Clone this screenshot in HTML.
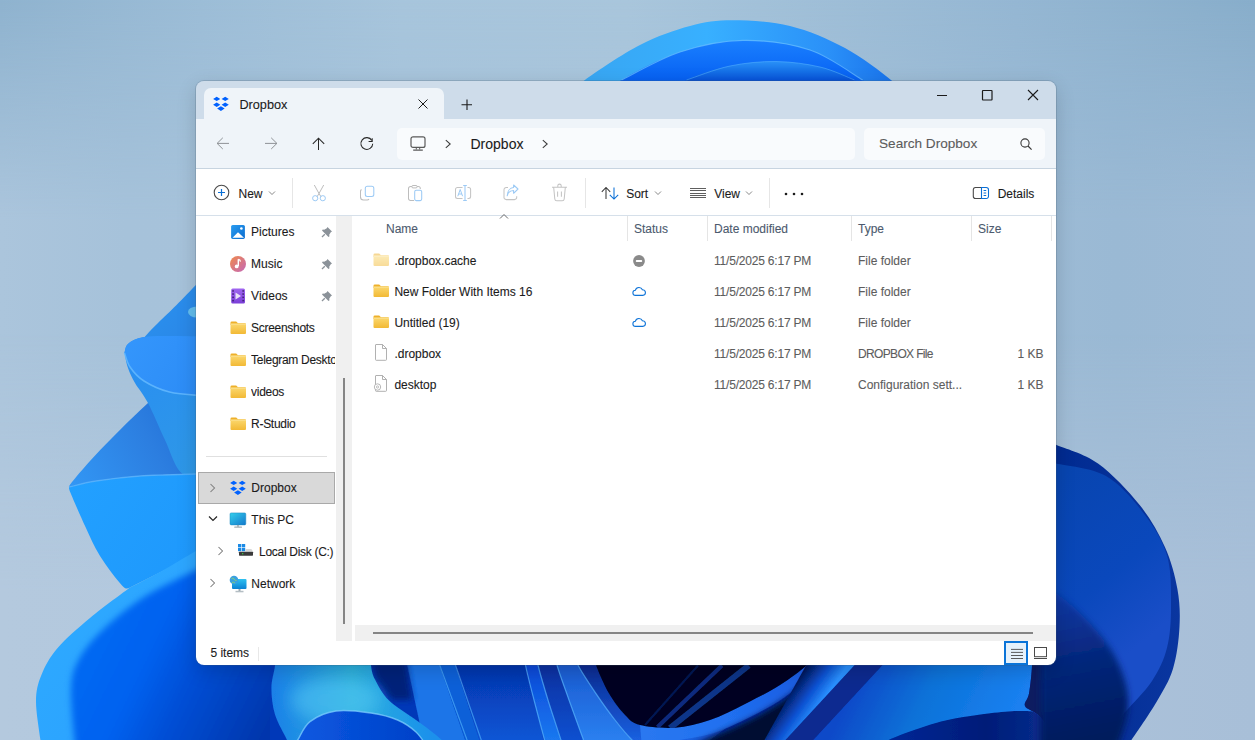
<!DOCTYPE html>
<html><head><meta charset="utf-8">
<style>
*{margin:0;padding:0;box-sizing:border-box}
html,body{width:1255px;height:740px;overflow:hidden}
body{position:relative;font-family:"Liberation Sans",sans-serif;font-size:12px;color:#1b1b1b;background:#a9c2d8}
#wp{position:absolute;left:0;top:0}
.win{position:absolute;left:196px;top:81px;width:860px;height:584px;border-radius:8px;overflow:hidden;box-shadow:0 0 0 1px rgba(70,90,110,.22),0 6px 20px rgba(0,0,0,.16)}
.inner{position:absolute;left:-196px;top:-81px;width:1255px;height:740px}
.abs{position:absolute}
.t{position:absolute;white-space:nowrap;-webkit-text-stroke:0.1px currentColor}
</style></head><body>
<svg id="wp" width="1255" height="740" viewBox="0 0 1255 740"><defs>
<linearGradient id="bgT" x1="0" y1="0" x2="1255" y2="0" gradientUnits="userSpaceOnUse">
 <stop offset="0" stop-color="#8fb3cf"/><stop offset="0.16" stop-color="#9cbdd7"/><stop offset="0.32" stop-color="#a7c5dc"/>
 <stop offset="0.5" stop-color="#a9c6dc"/><stop offset="0.81" stop-color="#95b7d3"/><stop offset="1" stop-color="#88aecb"/>
</linearGradient>
<linearGradient id="bgM" x1="0" y1="0" x2="1255" y2="0" gradientUnits="userSpaceOnUse">
 <stop offset="0" stop-color="#abc5dc"/><stop offset="0.1" stop-color="#a6c2da"/><stop offset="0.5" stop-color="#a8c3da"/><stop offset="0.89" stop-color="#9ab9d4"/><stop offset="1" stop-color="#9ebad5"/>
</linearGradient>
<linearGradient id="bgB" x1="0" y1="0" x2="1255" y2="0" gradientUnits="userSpaceOnUse">
 <stop offset="0" stop-color="#b4c9de"/><stop offset="0.5" stop-color="#b0c6dc"/><stop offset="1" stop-color="#a8bfd8"/>
</linearGradient>
<linearGradient id="mT" x1="0" y1="0" x2="0" y2="740" gradientUnits="userSpaceOnUse">
 <stop offset="0" stop-color="#000"/><stop offset="0.3" stop-color="#fff"/>
</linearGradient>
<linearGradient id="mB" x1="0" y1="0" x2="0" y2="740" gradientUnits="userSpaceOnUse">
 <stop offset="0.45" stop-color="#000"/><stop offset="0.8" stop-color="#fff"/>
</linearGradient>
<mask id="maskM"><rect width="1255" height="740" fill="url(#mT)"/></mask>
<mask id="maskB"><rect width="1255" height="740" fill="url(#mB)"/></mask>

<linearGradient id="a1" x1="584" y1="0" x2="891" y2="0" gradientUnits="userSpaceOnUse"><stop offset="0" stop-color="#38a6f2"/><stop offset="0.4" stop-color="#38b0ff"/><stop offset="0.8" stop-color="#2a90f8"/><stop offset="1" stop-color="#1a74ec"/></linearGradient>
<linearGradient id="a2" x1="0" y1="40" x2="0" y2="81" gradientUnits="userSpaceOnUse"><stop offset="0" stop-color="#1a80ff"/><stop offset="1" stop-color="#0660f2"/></linearGradient>
<linearGradient id="a3" x1="0" y1="61" x2="0" y2="81" gradientUnits="userSpaceOnUse"><stop offset="0" stop-color="#2a92f8"/><stop offset="0.5" stop-color="#1672e8"/><stop offset="1" stop-color="#0650d8"/></linearGradient>
<linearGradient id="pA" x1="150" y1="290" x2="200" y2="335" gradientUnits="userSpaceOnUse"><stop offset="0" stop-color="#2a92f0"/><stop offset="1" stop-color="#2a86e6"/></linearGradient>
<linearGradient id="pBi" x1="125" y1="340" x2="200" y2="390" gradientUnits="userSpaceOnUse"><stop offset="0" stop-color="#3496fc"/><stop offset="1" stop-color="#2c8cf6"/></linearGradient>
<linearGradient id="pBb" x1="130" y1="380" x2="200" y2="480" gradientUnits="userSpaceOnUse"><stop offset="0" stop-color="#2a90f0"/><stop offset="1" stop-color="#2e98e6"/></linearGradient>
<linearGradient id="pCi" x1="70" y1="480" x2="200" y2="410" gradientUnits="userSpaceOnUse"><stop offset="0" stop-color="#3296f4"/><stop offset="0.6" stop-color="#2c7ee0"/><stop offset="1" stop-color="#1f6cd4"/></linearGradient>
<linearGradient id="pCf" x1="70" y1="490" x2="200" y2="580" gradientUnits="userSpaceOnUse"><stop offset="0" stop-color="#22a0ff"/><stop offset="1" stop-color="#1e98fc"/></linearGradient>
<linearGradient id="pDb" x1="40" y1="600" x2="200" y2="740" gradientUnits="userSpaceOnUse"><stop offset="0" stop-color="#2eaaff"/><stop offset="1" stop-color="#2aa0ff"/></linearGradient>
<linearGradient id="pDi" x1="75" y1="600" x2="280" y2="700" gradientUnits="userSpaceOnUse"><stop offset="0" stop-color="#0a6cf4"/><stop offset="0.39" stop-color="#0062f0"/><stop offset="0.59" stop-color="#0050d8"/><stop offset="1" stop-color="#0036ac"/></linearGradient>
<linearGradient id="rO" x1="1056" y1="0" x2="1180" y2="0" gradientUnits="userSpaceOnUse"><stop offset="0" stop-color="#002a90"/><stop offset="1" stop-color="#0a36a0"/></linearGradient>
<linearGradient id="rI" x1="1056" y1="480" x2="1170" y2="620" gradientUnits="userSpaceOnUse"><stop offset="0" stop-color="#0845b0"/><stop offset="0.6" stop-color="#0a48bc"/><stop offset="1" stop-color="#1a4ec8"/></linearGradient>
<linearGradient id="rD" x1="1060" y1="590" x2="1090" y2="740" gradientUnits="userSpaceOnUse"><stop offset="0" stop-color="#0a3aa8"/><stop offset="0.5" stop-color="#06267a"/><stop offset="1" stop-color="#041a5c"/></linearGradient>
<linearGradient id="sw" x1="272" y1="700" x2="433" y2="700" gradientUnits="userSpaceOnUse"><stop offset="0" stop-color="#1a80e8"/><stop offset="0.5" stop-color="#2cb0dc"/><stop offset="1" stop-color="#1a90ec"/></linearGradient>
<linearGradient id="bB" x1="789" y1="0" x2="1056" y2="0" gradientUnits="userSpaceOnUse"><stop offset="0" stop-color="#0a3aa8"/><stop offset="0.3" stop-color="#0a60d0"/><stop offset="0.55" stop-color="#0a72d8"/><stop offset="0.85" stop-color="#0c5cc0"/><stop offset="1" stop-color="#0c48a0"/></linearGradient>
<linearGradient id="sL" x1="196" y1="0" x2="280" y2="0" gradientUnits="userSpaceOnUse"><stop offset="0" stop-color="#0050d8"/><stop offset="1" stop-color="#0036ac"/></linearGradient>
<linearGradient id="sDk" x1="0" y1="655" x2="0" y2="725" gradientUnits="userSpaceOnUse"><stop offset="0" stop-color="#0a2a90"/><stop offset="1" stop-color="#1a4ad0"/></linearGradient>
<linearGradient id="sG" x1="0" y1="655" x2="0" y2="745" gradientUnits="userSpaceOnUse"><stop offset="0" stop-color="#0430a8"/><stop offset="1" stop-color="#0a58d8"/></linearGradient>
<linearGradient id="sH" x1="300" y1="0" x2="425" y2="0" gradientUnits="userSpaceOnUse"><stop offset="0" stop-color="#0a58e0"/><stop offset="1" stop-color="#0040c8"/></linearGradient>
<linearGradient id="sBand" x1="0" y1="655" x2="0" y2="745" gradientUnits="userSpaceOnUse"><stop offset="0" stop-color="#2a78f0"/><stop offset="1" stop-color="#3a8cf8"/></linearGradient>
<linearGradient id="sStripe" x1="640" y1="730" x2="760" y2="655" gradientUnits="userSpaceOnUse"><stop offset="0" stop-color="#1a50d8"/><stop offset="1" stop-color="#0a2a88"/></linearGradient>
<linearGradient id="sLD" x1="880" y1="0" x2="1056" y2="0" gradientUnits="userSpaceOnUse"><stop offset="0" stop-color="#00289a"/><stop offset="0.6" stop-color="#001c78"/><stop offset="1" stop-color="#0a3090"/></linearGradient>
<filter id="blur1" x="-5%" y="-20%" width="110%" height="140%"><feGaussianBlur stdDeviation="0.7"/></filter>
<filter id="blur3" x="-30%" y="-30%" width="160%" height="160%"><feGaussianBlur stdDeviation="3"/></filter>
<filter id="blur6" x="-50%" y="-50%" width="200%" height="200%"><feGaussianBlur stdDeviation="8"/></filter>
<linearGradient id="gB1" x1="0" y1="665" x2="0" y2="740" gradientUnits="userSpaceOnUse"><stop offset="0" stop-color="#0a48d8"/><stop offset="1" stop-color="#1a78f0"/></linearGradient>
<linearGradient id="gB2" x1="0" y1="665" x2="0" y2="740" gradientUnits="userSpaceOnUse"><stop offset="0" stop-color="#0a30a0"/><stop offset="1" stop-color="#0a50d0"/></linearGradient>
<linearGradient id="gB3" x1="0" y1="665" x2="0" y2="740" gradientUnits="userSpaceOnUse"><stop offset="0" stop-color="#1a5ad0"/><stop offset="1" stop-color="#2a80f0"/></linearGradient>
<linearGradient id="gB4" x1="0" y1="665" x2="0" y2="740" gradientUnits="userSpaceOnUse"><stop offset="0" stop-color="#0a2a90"/><stop offset="1" stop-color="#1a60e0"/></linearGradient>
<linearGradient id="gWrap" x1="640" y1="0" x2="810" y2="0" gradientUnits="userSpaceOnUse"><stop offset="0" stop-color="#2a78f0"/><stop offset="0.5" stop-color="#2070f0"/><stop offset="1" stop-color="#1a5ae0"/></linearGradient>
<linearGradient id="gR0" x1="775" y1="705" x2="805" y2="726" gradientUnits="userSpaceOnUse"><stop offset="0" stop-color="#020a40"/><stop offset="0.6" stop-color="#0a50d0"/><stop offset="1" stop-color="#2a90ff"/></linearGradient>
<linearGradient id="gR2" x1="860" y1="670" x2="1000" y2="740" gradientUnits="userSpaceOnUse"><stop offset="0" stop-color="#0a48c8"/><stop offset="0.45" stop-color="#0a72d8"/><stop offset="1" stop-color="#1a80f0"/></linearGradient>
</defs><rect width="1255" height="740" fill="url(#bgT)"/><rect width="1255" height="740" fill="url(#bgM)" mask="url(#maskM)"/><rect width="1255" height="740" fill="url(#bgB)" mask="url(#maskB)"/><path d="M572 95 C574.1 92.5 573.6 88.3 584.9 80.0 C596.2 71.7 622.5 54.0 640.0 45.0 C657.5 36.0 674.6 30.1 690.0 26.0 C705.4 21.9 715.9 20.3 732.6 20.3 C749.3 20.3 771.3 21.4 790.0 26.0 C808.7 30.6 828.2 39.0 845.0 48.0 C861.8 57.0 881.5 72.2 891.0 80.0 C900.5 87.8 900.2 92.5 902.0 95.0 Z" fill="url(#a1)"/><path d="M610 95 C611.9 92.5 609.8 87.2 621.5 80.0 C633.2 72.8 659.8 58.6 680.0 52.0 C700.2 45.4 721.3 40.7 743.0 40.4 C764.7 40.1 790.0 43.4 810.0 50.0 C830.0 56.6 852.4 72.5 862.7 80.0 C873.0 87.5 870.5 92.5 872.0 95.0 Z" fill="url(#a2)"/><path d="M621.5 80 C631.2 75.3 659.8 58.6 680.0 52.0 C700.2 45.4 721.3 40.7 743.0 40.4 C764.7 40.1 790.0 43.4 810.0 50.0 C830.0 56.6 853.9 75.0 862.7 80.0" fill="none" stroke="#6cc2ff" stroke-width="1.2" opacity="0.7"/><path d="M674 95 C676.1 92.5 677.2 84.8 686.5 80.0 C695.8 75.2 715.1 69.1 730.0 66.0 C744.9 62.9 761.0 61.3 776.0 61.5 C791.0 61.7 806.9 63.9 820.0 67.0 C833.1 70.1 847.2 75.3 854.5 80.0 C861.8 84.7 862.4 92.5 864.0 95.0 Z" fill="url(#a3)"/><path d="M686.5 80 C693.8 77.7 715.1 69.1 730.0 66.0 C744.9 62.9 761.0 61.3 776.0 61.5 C791.0 61.7 806.9 63.9 820.0 67.0 C833.1 70.1 848.8 77.8 854.5 80.0" fill="none" stroke="#5cb8ff" stroke-width="1" opacity="0.5"/><path d="M202 279 C200.9 280.1 199.7 281.2 195.4 285.5 C191.2 289.8 182.7 298.8 176.5 305.0 C170.3 311.2 162.9 318.2 158.0 323.0 C153.1 327.8 150.3 330.8 147.3 334.0 C144.3 337.2 141.2 340.7 140.0 342.0 L140 350 L205 350 L205 279 Z" fill="url(#pA)"/><ellipse cx="197" cy="312" rx="9" ry="5.5" fill="#6ec8f0" opacity="0.85" filter="url(#blur1)"/><path d="M148 403 C145.0 405.8 136.2 414.0 130.0 420.0 C123.8 426.0 117.7 432.2 111.0 439.0 C104.3 445.8 96.5 453.8 90.0 461.0 C83.5 468.2 75.5 477.7 72.0 482.0 C68.5 486.3 69.5 486.2 69.0 487.0  C73.5 486.0 84.2 482.8 96.0 481.0 C107.8 479.2 123.3 477.2 140.0 476.0 C156.7 474.8 185.2 474.3 196.0 474.0 C206.8 473.7 203.5 474.0 205.0 474.0 L205 403 Z" fill="url(#pCi)"/><path d="M124.5 353 C124.9 351.7 125.2 347.2 127.0 345.0 C128.8 342.8 131.3 340.9 135.0 339.5 C138.7 338.1 142.3 337.1 149.0 336.5 C155.7 335.9 165.7 335.9 175.0 336.0 C184.3 336.1 200.0 336.8 205.0 337.0 L205 485  C200.9 482.8 187.1 479.5 180.4 472.0 C173.7 464.5 170.4 451.5 165.0 440.0 C159.6 428.5 153.0 412.5 148.0 403.0 C143.0 393.5 138.3 388.8 135.0 383.0 C131.7 377.2 129.8 373.0 128.0 368.0 C126.2 363.0 125.1 355.5 124.5 353.0 Z" fill="url(#pBb)"/><path d="M124.5 353 C124.9 351.7 125.2 347.2 127.0 345.0 C128.8 342.8 131.3 340.9 135.0 339.5 C138.7 338.1 142.3 337.1 149.0 336.5 C155.7 335.9 165.7 335.9 175.0 336.0 C184.3 336.1 200.0 336.8 205.0 337.0 L205 396  C199.1 395.3 179.7 394.5 169.5 392.0 C159.3 389.5 150.6 385.2 144.0 381.0 C137.4 376.8 133.2 371.7 130.0 367.0 C126.8 362.3 125.4 355.3 124.5 353.0 Z" fill="url(#pBi)"/><path d="M205 396 C199.1 395.3 179.7 394.5 169.5 392.0 C159.3 389.5 150.6 385.2 144.0 381.0 C137.4 376.8 133.2 371.7 130.0 367.0 C126.8 362.3 125.4 355.3 124.5 353.0" fill="none" stroke="#66bcff" stroke-width="1.6" opacity="0.8"/><path d="M69 487 C69.3 488.2 68.2 487.3 71.0 494.0 C73.8 500.7 80.7 516.7 85.5 527.0 C90.3 537.3 93.9 546.2 100.0 556.0 C106.1 565.8 117.2 580.2 122.0 585.5 C126.8 590.8 127.8 587.6 129.0 588.0 L205 550 L205 474  C203.5 474.0 206.8 473.7 196.0 474.0 C185.2 474.3 156.7 474.8 140.0 476.0 C123.3 477.2 107.8 479.2 96.0 481.0 C84.2 482.8 73.5 486.0 69.0 487.0 Z" fill="url(#pCf)"/><path d="M69 487 C73.5 486.0 84.2 482.8 96.0 481.0 C107.8 479.2 123.3 477.2 140.0 476.0 C156.7 474.8 185.2 474.3 196.0 474.0 C206.8 473.7 203.5 474.0 205.0 474.0" fill="none" stroke="#5cb4fc" stroke-width="1.4" opacity="0.7"/><path d="M129 588 C134.2 585.3 148.8 578.2 160.0 572.0 C171.2 565.8 188.5 555.2 196.0 551.0 C203.5 546.8 203.5 547.7 205.0 547.0 L205 745 L41 745  C40.5 737.8 36.0 713.7 36.0 702.0 C36.0 690.3 37.8 684.0 41.4 675.0 C45.0 666.0 49.5 657.5 57.6 648.0 C65.7 638.5 77.8 628.2 90.0 618.0 C102.2 607.8 123.8 592.2 130.6 587.0 Z" fill="url(#pDb)"/><path d="M205 566 C203.5 566.7 206.2 564.8 196.0 570.0 C185.8 575.2 159.4 587.2 144.0 597.0 C128.6 606.8 114.4 618.7 103.6 629.0 C92.8 639.3 84.4 648.7 79.0 659.0 C73.6 669.3 71.4 674.2 71.0 691.0 C70.6 707.8 75.6 748.5 76.5 760.0 L300 760 L300 566 Z" fill="url(#pDi)" filter="url(#blur3)"/><g filter="url(#blur1)"><rect x="270" y="655" width="790" height="90" fill="#0438b8"/><path d="M405 655 L436 655 L468 748 L425 748 Z" fill="#1a74e8"/><path d="M436 655 L452 655 L482 748 L468 748 Z" fill="#0a60d8"/><path d="M452 655 L526 655 L545 748 L482 748 Z" fill="url(#sG)"/><path d="M525.5 655 C525.5 656.7 524.1 657.5 525.5 665.0 C526.9 672.5 530.8 687.5 534.0 700.0 C537.2 712.5 542.5 732.0 544.5 740.0 C546.5 748.0 545.8 746.7 546.0 748.0 L563 748  C562.7 746.7 563.5 748.0 561.0 740.0 C558.5 732.0 551.8 712.5 548.0 700.0 C544.2 687.5 539.7 672.5 538.0 665.0 C536.3 657.5 538.0 656.7 538.0 655.0 Z" fill="url(#gB1)"/><path d="M538 655 C538.0 656.7 536.3 657.5 538.0 665.0 C539.7 672.5 544.2 687.5 548.0 700.0 C551.8 712.5 558.5 732.0 561.0 740.0 C563.5 748.0 562.7 746.7 563.0 748.0 L586 748  C585.6 746.7 586.3 748.0 583.5 740.0 C580.7 732.0 573.4 712.5 569.0 700.0 C564.6 687.5 559.0 672.5 557.0 665.0 C555.0 657.5 557.0 656.7 557.0 655.0 Z" fill="url(#gB2)"/><path d="M557 655 C557.0 656.7 555.0 657.5 557.0 665.0 C559.0 672.5 564.6 687.5 569.0 700.0 C573.4 712.5 580.7 732.0 583.5 740.0 C586.3 748.0 585.6 746.7 586.0 748.0 L642 748  C640.3 746.7 636.5 744.7 632.0 740.0 C627.5 735.3 621.0 727.7 615.0 720.0 C609.0 712.3 602.2 702.8 596.0 693.6 C589.8 684.4 581.0 671.4 578.0 665.0 C575.0 658.6 578.0 656.7 578.0 655.0 Z" fill="url(#gB3)"/><path d="M578 655 C578.0 656.7 575.0 658.6 578.0 665.0 C581.0 671.4 589.8 684.4 596.0 693.6 C602.2 702.8 609.0 712.3 615.0 720.0 C621.0 727.7 627.5 735.3 632.0 740.0 C636.5 744.7 640.3 746.7 642.0 748.0 L700 748 L820 655 Z" fill="url(#gB4)"/><path d="M525.5 655 C525.5 656.7 524.1 657.5 525.5 665.0 C526.9 672.5 530.8 687.5 534.0 700.0 C537.2 712.5 542.5 732.0 544.5 740.0 C546.5 748.0 545.8 746.7 546.0 748.0" fill="none" stroke="#5ab8ff" stroke-width="1.2" opacity="0.7"/><path d="M538 655 C538.0 656.7 536.3 657.5 538.0 665.0 C539.7 672.5 544.2 687.5 548.0 700.0 C551.8 712.5 558.5 732.0 561.0 740.0 C563.5 748.0 562.7 746.7 563.0 748.0" fill="none" stroke="#5ab8ff" stroke-width="1.2" opacity="0.7"/><path d="M557 655 C557.0 656.7 555.0 657.5 557.0 665.0 C559.0 672.5 564.6 687.5 569.0 700.0 C573.4 712.5 580.7 732.0 583.5 740.0 C586.3 748.0 585.6 746.7 586.0 748.0" fill="none" stroke="#5ab8ff" stroke-width="1.2" opacity="0.7"/><path d="M578 655 C578.0 656.7 575.0 658.6 578.0 665.0 C581.0 671.4 589.8 684.4 596.0 693.6 C602.2 702.8 609.0 712.3 615.0 720.0 C621.0 727.7 627.5 735.3 632.0 740.0 C636.5 744.7 640.3 746.7 642.0 748.0" fill="none" stroke="#5ab8ff" stroke-width="1.2" opacity="0.7"/><path d="M436 655 L470 748" stroke="#5ab8ff" stroke-width="1.2" opacity="0.6"/><path d="M452 655 L484 748" stroke="#5ab8ff" stroke-width="1.2" opacity="0.6"/><path d="M640 725 C645.8 725.5 663.3 728.5 675.0 727.7 C686.7 726.9 698.3 724.0 710.0 720.0 C721.7 716.0 733.3 709.8 745.0 704.0 C756.7 698.2 769.8 691.4 780.0 685.0 C790.2 678.6 800.8 670.5 806.5 665.5 C812.2 660.5 812.8 656.8 814.0 655.0 L830 655  C828.7 656.8 829.5 658.5 822.0 665.5 C814.5 672.5 797.0 688.4 785.0 697.0 C773.0 705.6 761.8 711.0 750.0 717.0 C738.2 723.0 725.7 729.2 714.0 733.0 C702.3 736.8 692.0 737.5 680.0 740.0 C668.0 742.5 648.3 746.7 642.0 748.0 L640 725 Z" fill="url(#gWrap)"/><path d="M690 748 C705 738 730 730 760 714 C785 700 800 690 815 672 L830 680 C815 720 790 740 770 748 Z" fill="#000a30" filter="url(#blur3)"/><path d="M596 655 C596.0 656.7 593.8 658.6 596.0 665.0 C598.2 671.4 604.2 685.3 609.0 693.6 C613.8 701.9 619.8 709.8 625.0 715.0 C630.2 720.2 631.7 722.9 640.0 725.0 C648.3 727.1 663.3 728.5 675.0 727.7 C686.7 726.9 698.3 724.0 710.0 720.0 C721.7 716.0 733.3 709.8 745.0 704.0 C756.7 698.2 769.8 691.4 780.0 685.0 C790.2 678.6 800.8 670.5 806.5 665.5 C812.2 660.5 812.8 656.8 814.0 655.0 Z" fill="#000520"/><clipPath id="navyClip"><path d="M596 655 C596.0 656.7 593.8 658.6 596.0 665.0 C598.2 671.4 604.2 685.3 609.0 693.6 C613.8 701.9 619.8 709.8 625.0 715.0 C630.2 720.2 631.7 722.9 640.0 725.0 C648.3 727.1 663.3 728.5 675.0 727.7 C686.7 726.9 698.3 724.0 710.0 720.0 C721.7 716.0 733.3 709.8 745.0 704.0 C756.7 698.2 769.8 691.4 780.0 685.0 C790.2 678.6 800.8 670.5 806.5 665.5 C812.2 660.5 812.8 656.8 814.0 655.0 Z"/></clipPath><g clip-path="url(#navyClip)" filter="url(#blur1)"><path d="M645 725 L698 665.5" stroke="#0a2a80" stroke-width="2" opacity="0.55"/><path d="M657.5 727 L722 665.5" stroke="#1a4ad0" stroke-width="4" opacity="0.55"/><path d="M670 728 L748.7 665.5" stroke="#1a60e0" stroke-width="6" opacity="0.55"/></g><path d="M760 748 L806 665.5 L812 655 L864 655 L780 748 Z" fill="url(#gR0)"/><path d="M778 748 L864 655 L892 655 L806 748 Z" fill="#0a2a90" filter="url(#blur1)"/><path d="M806 748 L892 655  L1030 655  C1030.3 656.8 1032.2 659.1 1032.0 665.5 C1031.8 671.9 1030.2 686.8 1029.0 693.5 C1027.8 700.2 1023.6 702.5 1025.0 706.0 C1026.4 709.5 1033.2 710.3 1037.6 714.6 C1042.0 718.9 1048.5 727.8 1051.6 732.0 C1054.7 736.2 1054.9 737.3 1056.0 740.0 C1057.1 742.7 1057.7 746.7 1058.0 748.0 Z" fill="url(#gR2)"/><path d="M1030 655 C1030.3 656.8 1032.2 659.1 1032.0 665.5 C1031.8 671.9 1030.2 686.8 1029.0 693.5 C1027.8 700.2 1023.6 702.5 1025.0 706.0 C1026.4 709.5 1033.2 710.3 1037.6 714.6 C1042.0 718.9 1048.5 727.8 1051.6 732.0 C1054.7 736.2 1054.9 737.3 1056.0 740.0 C1057.1 742.7 1057.7 746.7 1058.0 748.0 L1060 748 L1060 655 Z" fill="#0a1a60"/><path d="M880 748 C881.4 746.7 878.4 744.4 888.6 740.0 C898.8 735.6 923.5 726.1 941.0 721.6 C958.5 717.1 979.8 714.6 993.8 712.8 C1007.8 711.0 1017.7 710.7 1025.0 711.0 C1032.3 711.3 1033.2 711.1 1037.6 714.6 C1042.0 718.1 1048.5 727.8 1051.6 732.0 C1054.7 736.2 1054.9 737.3 1056.0 740.0 C1057.1 742.7 1057.7 746.7 1058.0 748.0 Z" fill="url(#sLD)"/><path d="M370 655 L405 655 L412 700 L392 700 L376 680 Z" fill="#05207a" filter="url(#blur3)"/><path d="M275 650 C275.0 652.6 275.6 659.2 275.0 665.5 C274.4 671.8 271.4 679.8 271.4 688.0 C271.4 696.2 272.4 705.9 275.0 714.6 C277.6 723.3 284.5 734.4 287.0 740.0 C289.5 745.6 289.5 746.7 290.0 748.0 L450 748  C447.7 745.8 441.7 739.7 436.0 735.0 C430.3 730.3 423.8 725.7 416.0 720.0 C408.2 714.3 395.8 707.4 389.0 700.6 C382.2 693.9 378.0 685.4 375.0 679.5 C372.0 673.6 371.7 670.4 371.0 665.5 C370.3 660.6 371.0 652.6 371.0 650.0 Z" fill="url(#sw)"/><ellipse cx="335" cy="700" rx="45" ry="22" fill="#55c8f4" opacity="0.55" filter="url(#blur6)"/><path d="M292 748 C292.9 746.7 294.7 744.4 297.7 740.0 C300.7 735.6 303.6 726.4 310.0 721.6 C316.4 716.8 325.8 712.4 336.0 711.0 C346.2 709.6 360.7 711.5 371.0 713.0 C381.3 714.5 390.1 716.8 397.6 720.0 C405.1 723.2 410.9 727.3 416.0 732.0 C421.1 736.7 426.0 745.3 428.0 748.0 Z" fill="url(#sH)"/><path d="M292 748 C292.9 746.7 294.7 744.4 297.7 740.0 C300.7 735.6 303.6 726.4 310.0 721.6 C316.4 716.8 325.8 712.4 336.0 711.0 C346.2 709.6 360.7 711.5 371.0 713.0 C381.3 714.5 390.1 716.8 397.6 720.0 C405.1 723.2 410.9 727.3 416.0 732.0 C421.1 736.7 426.0 745.3 428.0 748.0" fill="none" stroke="#7fd0ff" stroke-width="1.4" opacity="0.75"/></g><path d="M1050 442 C1051.0 442.4 1048.0 441.1 1056.0 444.7 C1064.0 448.3 1084.0 453.4 1098.0 463.5 C1112.0 473.6 1128.5 491.1 1139.7 505.0 C1150.9 518.9 1158.6 533.0 1164.9 547.0 C1171.2 561.0 1175.0 575.7 1177.4 589.0 C1179.8 602.3 1180.2 613.5 1179.5 626.8 C1178.8 640.1 1176.8 656.2 1173.0 668.7 C1169.2 681.2 1163.4 690.1 1156.5 702.0 C1149.6 713.9 1136.7 732.3 1131.4 740.0 C1126.2 747.7 1126.1 746.7 1125.0 748.0 L1045 748 L1045 442 Z" fill="url(#rO)"/><path d="M1050 462 C1051.0 462.2 1046.7 461.2 1056.0 463.5 C1065.3 465.8 1091.3 467.6 1106.0 476.0 C1120.7 484.4 1133.8 500.4 1144.0 513.7 C1154.2 527.0 1162.5 540.2 1167.0 555.6 C1171.5 571.0 1171.0 590.6 1171.0 606.0 C1171.0 621.4 1170.2 635.3 1167.0 647.8 C1163.8 660.3 1159.3 669.8 1152.0 681.0 C1144.7 692.2 1130.7 705.0 1123.0 714.8 C1115.3 724.6 1109.8 734.5 1106.0 740.0 C1102.2 745.5 1101.0 746.7 1100.0 748.0 L1045 748 L1045 462 Z" fill="url(#rI)"/><path d="M1050 590 C1051.0 590.5 1050.8 589.0 1056.0 593.0 C1061.2 597.0 1072.0 604.8 1081.0 614.0 C1090.0 623.2 1102.7 636.8 1110.0 648.0 C1117.3 659.2 1122.0 670.7 1125.0 681.0 C1128.0 691.3 1128.8 700.2 1128.0 710.0 C1127.2 719.8 1122.2 733.7 1120.0 740.0 C1117.8 746.3 1115.8 746.7 1115.0 748.0 L1040 748 L1040 590 Z" fill="url(#rD)" filter="url(#blur3)"/></svg>
<div class="win"><div class="inner">
<div class="abs" style="left:196px;top:81px;width:860px;height:38px;background:#cedcea;"></div>
<div class="abs" style="left:204px;top:88px;width:240px;height:31px;background:#eff4f9;border-radius:7px 7px 0 0"></div>
<div class="abs" style="left:196px;top:119px;width:860px;height:49px;background:#eff4f9;"></div>
<div class="abs" style="left:196px;top:168px;width:860px;height:1px;background:#c7d4e0;"></div>
<div class="abs" style="left:196px;top:169px;width:860px;height:46px;background:#ffffff;"></div>
<div class="abs" style="left:196px;top:215px;width:860px;height:1px;background:#d6e0ea;"></div>
<div class="abs" style="left:196px;top:216px;width:860px;height:449px;background:#ffffff;"></div>
<svg class="abs" style="left:210px;top:94px" width="22" height="20" viewBox="0 0 22 20"><path fill="#0061fe" d="M3.10 4.90L6.70 2.70L10.30 4.90L6.70 7.10ZM11.60 4.90L15.20 2.70L18.80 4.90L15.20 7.10ZM3.10 10.70L6.70 8.50L10.30 10.70L6.70 12.90ZM11.60 10.70L15.20 8.50L18.80 10.70L15.20 12.90ZM7.10 14.60L10.90 12.15L14.70 14.60L10.90 17.05Z"/></svg>
<div class="t" style="left:239.4px;top:98.85px;font-size:12.7px;line-height:12.7px;color:#1b1b1b;">Dropbox</div>
<svg class="abs" style="left:418px;top:99px" width="10" height="10" viewBox="0 0 10 10"><path d="M0.5 0.5L9.5 9.5M9.5 0.5L0.5 9.5" stroke="#1b1b1b" stroke-width="1"/></svg>
<svg class="abs" style="left:461px;top:99px" width="12" height="12" viewBox="0 0 12 12"><path d="M6 0.5V11M0.5 5.8H11" stroke="#1b1b1b" stroke-width="1.1"/></svg>
<div class="abs" style="left:937px;top:95px;width:10px;height:1px;background:#1b1b1b;"></div>
<svg class="abs" style="left:981px;top:89px" width="12" height="12" viewBox="0 0 12 12"><rect x="1.5" y="1.5" width="9.5" height="9.5" fill="none" stroke="#1b1b1b" stroke-width="1.2" rx="0.5"/></svg>
<svg class="abs" style="left:1027px;top:89px" width="12" height="12" viewBox="0 0 12 12"><path d="M1 1L11 11M11 1L1 11" stroke="#1b1b1b" stroke-width="1.1"/></svg>
<svg class="abs" style="left:215px;top:137px" width="16" height="13" viewBox="0 0 16 13"><path d="M2 6.4H14M7.8 0.8L2.1 6.4L7.8 12" fill="none" stroke="#8e9296" stroke-width="1"/></svg>
<svg class="abs" style="left:263px;top:137px" width="16" height="13" viewBox="0 0 16 13"><path d="M2 6.4H14M8.2 0.8L13.9 6.4L8.2 12" fill="none" stroke="#8e9296" stroke-width="1"/></svg>
<svg class="abs" style="left:311px;top:137px" width="15" height="14" viewBox="0 0 15 14"><path d="M7.5 1.2V13M1.8 6.8L7.5 1.2L13.2 6.8" fill="none" stroke="#262626" stroke-width="1.05"/></svg>
<svg class="abs" style="left:359px;top:136px" width="16" height="16" viewBox="0 0 16 16"><path d="M12.8 4.4A5.9 5.9 0 1 0 13.7 7.7" fill="none" stroke="#262626" stroke-width="1.05"/><path d="M13.2 2.2V5.5H9.6" fill="none" stroke="#262626" stroke-width="1.05"/></svg>
<div class="abs" style="left:397px;top:128px;width:458px;height:32px;background:#f9fbfd;border-radius:5px"></div>
<svg class="abs" style="left:409px;top:135px" width="18" height="17" viewBox="0 0 18 17"><rect x="2" y="1.8" width="14" height="10.6" rx="2" fill="none" stroke="#5a5a5a" stroke-width="1.2"/><path d="M7.3 12.6V14.5M10.7 12.6V14.5" stroke="#5a5a5a" stroke-width="1"/><path d="M4.2 15.2H13.8" stroke="#5a5a5a" stroke-width="1.3"/></svg>
<svg class="abs" style="left:444px;top:139px" width="8" height="10" viewBox="0 0 8 10"><path d="M1.8 1.2L6.2 5L1.8 8.8" fill="none" stroke="#3a3a3a" stroke-width="1.05"/></svg>
<div class="t" style="left:470.5px;top:136.95px;font-size:14px;line-height:14px;color:#1b1b1b;">Dropbox</div>
<svg class="abs" style="left:541px;top:139px" width="8" height="10" viewBox="0 0 8 10"><path d="M1.8 1.2L6.2 5L1.8 8.8" fill="none" stroke="#3a3a3a" stroke-width="1.05"/></svg>
<div class="abs" style="left:864px;top:128px;width:181px;height:32px;background:#f9fbfd;border-radius:5px"></div>
<div class="t" style="left:879px;top:137.19px;font-size:13.6px;line-height:13.6px;color:#5c5c5c;">Search Dropbox</div>
<svg class="abs" style="left:1019px;top:137px" width="14" height="14" viewBox="0 0 14 14"><circle cx="6" cy="6" r="4.1" fill="none" stroke="#3a3a3a" stroke-width="1.1"/><path d="M9 9L12.6 12.6" stroke="#3a3a3a" stroke-width="1.2"/></svg>
<svg class="abs" style="left:213px;top:184px" width="17" height="17" viewBox="0 0 17 17"><circle cx="8.5" cy="8.5" r="7.3" fill="none" stroke="#4a4a4a" stroke-width="1.1"/><path d="M8.5 5V12M5 8.5H12" stroke="#0a6fd6" stroke-width="1.2"/></svg>
<div class="t" style="left:238.5px;top:187.64px;font-size:12px;line-height:12px;color:#1b1b1b;">New</div>
<svg class="abs" style="left:268px;top:190px" width="8" height="6" viewBox="0 0 8 6"><path d="M1 1.5L4 4.5L7 1.5" fill="none" stroke="#7a7a7a" stroke-width="0.9"/></svg>
<div class="abs" style="left:292px;top:178px;width:1px;height:30px;background:#e6e6e6;"></div>
<svg class="abs" style="left:309px;top:183px" width="20" height="20" viewBox="0 0 20 20"><path d="M5.3 2L10 10.5M14.7 2L10 10.5L8 13.8M10 10.5L12 13.8" fill="none" stroke="#bdbdbd" stroke-width="1"/><circle cx="6.2" cy="15.2" r="2.6" fill="none" stroke="#9ccaf5" stroke-width="1"/><circle cx="13.8" cy="15.2" r="2.6" fill="none" stroke="#9ccaf5" stroke-width="1"/></svg>
<svg class="abs" style="left:358px;top:184px" width="18" height="18" viewBox="0 0 18 18"><path d="M3.5 5.5A2.2 2.2 0 0 0 2.5 7.5V13A3 3 0 0 0 5.5 16H9.2A2.2 2.2 0 0 0 11 15" fill="none" stroke="#bdbdbd" stroke-width="1.05"/><rect x="7.3" y="2.3" width="8.5" height="10.2" rx="2" fill="none" stroke="#9ccaf5" stroke-width="1.05"/></svg>
<svg class="abs" style="left:406px;top:184px" width="18" height="18" viewBox="0 0 18 18"><path d="M8 16.5H4.5A2 2 0 0 1 2.5 14.5V4.5A2 2 0 0 1 4.5 2.5H6M11 2.5H12.3A2 2 0 0 1 14.3 4.5V5" fill="none" stroke="#bdbdbd" stroke-width="1.05"/><rect x="5.8" y="1.5" width="5.4" height="2.4" rx="1.2" fill="none" stroke="#bdbdbd" stroke-width="1"/><rect x="8.7" y="6.3" width="7" height="10.3" rx="1.5" fill="none" stroke="#9ccaf5" stroke-width="1.05"/></svg>
<svg class="abs" style="left:454px;top:184px" width="18" height="18" viewBox="0 0 18 18"><path d="M8.5 3.5H3.5A2 2 0 0 0 1.5 5.5V12.5A2 2 0 0 0 3.5 14.5H8.5M13.5 3.5H14.6A2 2 0 0 1 16.6 5.5V12.5A2 2 0 0 1 14.6 14.5H13.5" fill="none" stroke="#c4c4c4" stroke-width="1.05"/><path d="M3.8 12.2L6.2 5.5L8.6 12.2M4.6 10H7.8" fill="none" stroke="#9ccaf5" stroke-width="1"/><path d="M11 1.5V16.5M9.2 1.5H12.8M9.2 16.5H12.8" fill="none" stroke="#9ccaf5" stroke-width="1.05"/></svg>
<svg class="abs" style="left:502px;top:184px" width="18" height="18" viewBox="0 0 18 18"><path d="M6 3.5H4.2A2.2 2.2 0 0 0 2 5.7V13.4A2.2 2.2 0 0 0 4.2 15.6H12.5A2.2 2.2 0 0 0 14.7 13.4V12.3" fill="none" stroke="#c4c4c4" stroke-width="1.05"/><path d="M5.2 11.8C6 8.5 8.5 6.5 11.6 6.5V9.3L16 5L11.6 1V3.6C8 4 5.3 7.3 5.2 11.8Z" fill="none" stroke="#9ccaf5" stroke-width="1.05" stroke-linejoin="round"/></svg>
<svg class="abs" style="left:551px;top:183px" width="17" height="19" viewBox="0 0 17 19"><path d="M1 4.3H16M6.8 4.2V2.8A1.7 1.7 0 0 1 10.2 2.8V4.2M2.7 4.5L3.8 16A2 2 0 0 0 5.8 17.8H11.2A2 2 0 0 0 13.2 16L14.3 4.5M6.6 8.5V13.8M10.4 8.5V13.8" fill="none" stroke="#c4c4c4" stroke-width="1.05"/></svg>
<div class="abs" style="left:585px;top:178px;width:1px;height:30px;background:#e6e6e6;"></div>
<svg class="abs" style="left:600px;top:186px" width="20" height="14" viewBox="0 0 20 14"><path d="M6 13V1.5M1.8 5.8L6 1.5L10.2 5.8" fill="none" stroke="#3a3a3a" stroke-width="1.05"/><path d="M14 1.5V13M9.8 8.8L14 13L18.2 8.8" fill="none" stroke="#0a6fd6" stroke-width="1.05"/></svg>
<div class="t" style="left:626.2px;top:187.64px;font-size:12px;line-height:12px;color:#1b1b1b;">Sort</div>
<svg class="abs" style="left:654px;top:190px" width="8" height="6" viewBox="0 0 8 6"><path d="M1 1.5L4 4.5L7 1.5" fill="none" stroke="#7a7a7a" stroke-width="0.9"/></svg>
<svg class="abs" style="left:689px;top:186px" width="18" height="13" viewBox="0 0 18 13"><path d="M1 2.5H17M1 4.5H17M1 7.5H17M1 9.5H17M1 11.5H17" stroke="#5e5e5e" stroke-width="1" shape-rendering="crispEdges"/></svg>
<div class="t" style="left:714.2px;top:187.64px;font-size:12px;line-height:12px;color:#1b1b1b;">View</div>
<svg class="abs" style="left:745px;top:190px" width="8" height="6" viewBox="0 0 8 6"><path d="M1 1.5L4 4.5L7 1.5" fill="none" stroke="#7a7a7a" stroke-width="0.9"/></svg>
<div class="abs" style="left:769px;top:178px;width:1px;height:30px;background:#e6e6e6;"></div>
<svg class="abs" style="left:784px;top:192px" width="20" height="4" viewBox="0 0 20 4"><circle cx="2" cy="2" r="1.3" fill="#1b1b1b"/><circle cx="10" cy="2" r="1.3" fill="#1b1b1b"/><circle cx="18" cy="2" r="1.3" fill="#1b1b1b"/></svg>
<svg class="abs" style="left:972px;top:186px" width="18" height="14" viewBox="0 0 18 14"><path d="M9.5 1.5H3.5A2.3 2.3 0 0 0 1.3 3.8V10.2A2.3 2.3 0 0 0 3.5 12.5H9.5" fill="none" stroke="#4a4a4a" stroke-width="1.1"/><path d="M9.5 1.5H14.2A2.3 2.3 0 0 1 16.5 3.8V10.2A2.3 2.3 0 0 1 14.2 12.5H9.5ZM11.6 4.5H14.2M11.6 7H14.2M11.6 9.5H14.2" fill="none" stroke="#0a6fd6" stroke-width="1.1"/></svg>
<div class="t" style="left:997.7px;top:187.54px;font-size:12px;line-height:12px;color:#1b1b1b;">Details</div>
<div class="abs" style="left:336px;top:216px;width:16px;height:425px;background:#f0f0f0;"></div>
<div class="abs" style="left:343px;top:378px;width:2px;height:246px;background:#858585;"></div>
<svg class="abs" style="left:230px;top:224px" width="16" height="16" viewBox="0 0 16 16"><defs><linearGradient id="pg" x1="0" y1="0" x2="1" y2="1"><stop offset="0" stop-color="#2a9cf0"/><stop offset="1" stop-color="#0a6cd0"/></linearGradient></defs><rect x="1.1" y="1" width="13.8" height="13.9" rx="1.6" fill="url(#pg)"/><path d="M2.5 13.7L8 8.3L14 13.7Z" fill="#fff"/><circle cx="11.4" cy="4.5" r="1.3" fill="#fff"/></svg>
<div class="t" style="left:251.1px;top:226.04px;font-size:12px;line-height:12px;color:#1b1b1b;">Pictures</div>
<svg class="abs" style="left:321px;top:226px" width="12" height="12" viewBox="0 0 12 12"><path d="M6.5 1L11 5.5L9.8 6.2L8.2 8.8L8.5 10.2L7.5 11L1 4.5L1.8 3.5L3.2 3.8L5.8 2.2Z" fill="#8b9299"/><path d="M3.8 8.2L1 11" stroke="#8b9299" stroke-width="1.3"/></svg>
<svg class="abs" style="left:229px;top:255px" width="18" height="18" viewBox="0 0 18 18"><defs><linearGradient id="mg" x1="0" y1="0" x2="1" y2="1"><stop offset="0" stop-color="#f08a4a"/><stop offset="1" stop-color="#c468b8"/></linearGradient></defs><circle cx="9" cy="9" r="8" fill="url(#mg)"/><path d="M9.3 4.3V11" stroke="#fff" stroke-width="1.4"/><circle cx="7.7" cy="11.4" r="1.9" fill="#fff"/><path d="M9.3 4.3Q11.2 4.5 11.5 6.6" fill="none" stroke="#fff" stroke-width="1.2"/></svg>
<div class="t" style="left:251.1px;top:258.04px;font-size:12px;line-height:12px;color:#1b1b1b;">Music</div>
<svg class="abs" style="left:321px;top:258px" width="12" height="12" viewBox="0 0 12 12"><path d="M6.5 1L11 5.5L9.8 6.2L8.2 8.8L8.5 10.2L7.5 11L1 4.5L1.8 3.5L3.2 3.8L5.8 2.2Z" fill="#8b9299"/><path d="M3.8 8.2L1 11" stroke="#8b9299" stroke-width="1.3"/></svg>
<svg class="abs" style="left:230px;top:288px" width="16" height="16" viewBox="0 0 16 16"><defs><linearGradient id="vg" x1="0" y1="0" x2="0" y2="1"><stop offset="0" stop-color="#a066f0"/><stop offset="1" stop-color="#7a3ed8"/></linearGradient></defs><rect x="1.2" y="0.5" width="13.8" height="15" rx="1.5" fill="url(#vg)"/><g fill="#3a1f6a"><rect x="2.3" y="2.2" width="1.5" height="1.5"/><rect x="2.3" y="5.3" width="1.5" height="1.5"/><rect x="2.3" y="8.6" width="1.5" height="1.5"/><rect x="2.3" y="11.9" width="1.5" height="1.5"/><rect x="12.4" y="2.2" width="1.5" height="1.5"/><rect x="12.4" y="5.3" width="1.5" height="1.5"/><rect x="12.4" y="8.6" width="1.5" height="1.5"/><rect x="12.4" y="11.9" width="1.5" height="1.5"/></g><path d="M5.5 4.5L11 8L5.5 11.5Z" fill="#e8e0f8"/></svg>
<div class="t" style="left:251.1px;top:290.04px;font-size:12px;line-height:12px;color:#1b1b1b;">Videos</div>
<svg class="abs" style="left:321px;top:290px" width="12" height="12" viewBox="0 0 12 12"><path d="M6.5 1L11 5.5L9.8 6.2L8.2 8.8L8.5 10.2L7.5 11L1 4.5L1.8 3.5L3.2 3.8L5.8 2.2Z" fill="#8b9299"/><path d="M3.8 8.2L1 11" stroke="#8b9299" stroke-width="1.3"/></svg>
<svg class="abs" style="left:230px;top:321px" width="17" height="14" viewBox="0 0 17 14"><defs><linearGradient id="fg0" x1="0" y1="0" x2="0" y2="1"><stop offset="0" stop-color="#fbd86e"/><stop offset="1" stop-color="#f2b935"/></linearGradient></defs><path d="M0.5 1.8A1.3 1.3 0 0 1 1.8 0.5H6.2L8 2.2H14.7A1.3 1.3 0 0 1 16 3.5V4H0.5Z" fill="#eeb02a"/><rect x="0.5" y="2.6" width="15.5" height="10.4" rx="1" fill="url(#fg0)"/><path d="M0.5 3.2H16" stroke="#fce39a" stroke-width="0.8"/></svg>
<div class="t" style="left:251.1px;top:322.04px;font-size:12px;line-height:12px;color:#1b1b1b;max-width:84px;overflow:hidden;padding-bottom:3px;padding-right:1px;letter-spacing:-0.3px">Screenshots</div>
<svg class="abs" style="left:230px;top:353px" width="17" height="14" viewBox="0 0 17 14"><defs><linearGradient id="fg1" x1="0" y1="0" x2="0" y2="1"><stop offset="0" stop-color="#fbd86e"/><stop offset="1" stop-color="#f2b935"/></linearGradient></defs><path d="M0.5 1.8A1.3 1.3 0 0 1 1.8 0.5H6.2L8 2.2H14.7A1.3 1.3 0 0 1 16 3.5V4H0.5Z" fill="#eeb02a"/><rect x="0.5" y="2.6" width="15.5" height="10.4" rx="1" fill="url(#fg1)"/><path d="M0.5 3.2H16" stroke="#fce39a" stroke-width="0.8"/></svg>
<div class="t" style="left:251.1px;top:354.04px;font-size:12px;line-height:12px;color:#1b1b1b;max-width:84px;overflow:hidden;padding-bottom:3px;padding-right:1px;letter-spacing:-0.3px">Telegram Desktop</div>
<svg class="abs" style="left:230px;top:385px" width="17" height="14" viewBox="0 0 17 14"><defs><linearGradient id="fg2" x1="0" y1="0" x2="0" y2="1"><stop offset="0" stop-color="#fbd86e"/><stop offset="1" stop-color="#f2b935"/></linearGradient></defs><path d="M0.5 1.8A1.3 1.3 0 0 1 1.8 0.5H6.2L8 2.2H14.7A1.3 1.3 0 0 1 16 3.5V4H0.5Z" fill="#eeb02a"/><rect x="0.5" y="2.6" width="15.5" height="10.4" rx="1" fill="url(#fg2)"/><path d="M0.5 3.2H16" stroke="#fce39a" stroke-width="0.8"/></svg>
<div class="t" style="left:251.1px;top:386.04px;font-size:12px;line-height:12px;color:#1b1b1b;max-width:84px;overflow:hidden;padding-bottom:3px;padding-right:1px;letter-spacing:-0.3px">videos</div>
<svg class="abs" style="left:230px;top:417px" width="17" height="14" viewBox="0 0 17 14"><defs><linearGradient id="fg3" x1="0" y1="0" x2="0" y2="1"><stop offset="0" stop-color="#fbd86e"/><stop offset="1" stop-color="#f2b935"/></linearGradient></defs><path d="M0.5 1.8A1.3 1.3 0 0 1 1.8 0.5H6.2L8 2.2H14.7A1.3 1.3 0 0 1 16 3.5V4H0.5Z" fill="#eeb02a"/><rect x="0.5" y="2.6" width="15.5" height="10.4" rx="1" fill="url(#fg3)"/><path d="M0.5 3.2H16" stroke="#fce39a" stroke-width="0.8"/></svg>
<div class="t" style="left:251.1px;top:418.04px;font-size:12px;line-height:12px;color:#1b1b1b;max-width:84px;overflow:hidden;padding-bottom:3px;padding-right:1px;letter-spacing:-0.3px">R-Studio</div>
<div class="abs" style="left:206px;top:456px;width:121px;height:1px;background:#e0e0e0;"></div>
<div class="abs" style="left:198px;top:472px;width:137px;height:32px;background:#d9d9d9;border:1px solid #a9a9a9"></div>
<svg class="abs" style="left:209px;top:483px" width="8" height="10" viewBox="0 0 8 10"><path d="M1.5 1L5.5 5L1.5 9" fill="none" stroke="#7c7c7c" stroke-width="1.05"/></svg>
<svg class="abs" style="left:227.3px;top:478.2px" width="22" height="20" viewBox="0 0 22 20"><path fill="#0061fe" d="M3.10 4.90L6.70 2.70L10.30 4.90L6.70 7.10ZM11.60 4.90L15.20 2.70L18.80 4.90L15.20 7.10ZM3.10 10.70L6.70 8.50L10.30 10.70L6.70 12.90ZM11.60 10.70L15.20 8.50L18.80 10.70L15.20 12.90ZM7.10 14.60L10.90 12.15L14.70 14.60L10.90 17.05Z"/></svg>
<div class="t" style="left:251.3px;top:482.04px;font-size:12px;line-height:12px;color:#1b1b1b;">Dropbox</div>
<svg class="abs" style="left:208px;top:515px" width="10" height="8" viewBox="0 0 10 8"><path d="M1 1.5L5 5.5L9 1.5" fill="none" stroke="#262626" stroke-width="1.2"/></svg>
<svg class="abs" style="left:229px;top:512px" width="18" height="17" viewBox="0 0 18 17"><defs><linearGradient id="pcg" x1="0" y1="0" x2="1" y2="1"><stop offset="0" stop-color="#34d0ec"/><stop offset="1" stop-color="#1478cc"/></linearGradient></defs><rect x="1" y="0.9" width="15.8" height="12" rx="1.2" fill="url(#pcg)" stroke="#1a88c0" stroke-width="0.5"/><rect x="8.2" y="12.9" width="1.6" height="2" fill="#9aa6ad"/><rect x="5.2" y="14.6" width="7.8" height="1.2" rx="0.5" fill="#a4aeb4"/></svg>
<div class="t" style="left:251.3px;top:513.84px;font-size:12px;line-height:12px;color:#1b1b1b;">This PC</div>
<svg class="abs" style="left:217px;top:546px" width="8" height="10" viewBox="0 0 8 10"><path d="M1.5 1L5.5 5L1.5 9" fill="none" stroke="#7c7c7c" stroke-width="1.05"/></svg>
<svg class="abs" style="left:237px;top:543px" width="17" height="14" viewBox="0 0 17 14"><g fill="#1a8ae6"><rect x="1" y="1" width="3.3" height="3.3"/><rect x="4.9" y="1" width="3.3" height="3.3"/><rect x="1" y="4.9" width="3.3" height="3.3"/><rect x="4.9" y="4.9" width="3.3" height="3.3"/></g><path d="M8.5 6H14.3L16 8.5H8.5Z" fill="#d8d8d8"/><rect x="2" y="8.7" width="14" height="4" rx="0.6" fill="#3a3a3a"/><rect x="5" y="10.1" width="1.3" height="1.2" fill="#3ad04a"/></svg>
<div class="t" style="left:259.1px;top:545.84px;font-size:12px;line-height:12px;color:#1b1b1b;max-width:76px;overflow:hidden;padding-bottom:3px;padding-right:1px;letter-spacing:-0.3px">Local Disk (C:)</div>
<svg class="abs" style="left:209px;top:578px" width="8" height="10" viewBox="0 0 8 10"><path d="M1.5 1L5.5 5L1.5 9" fill="none" stroke="#7c7c7c" stroke-width="1.05"/></svg>
<svg class="abs" style="left:229px;top:575px" width="18" height="18" viewBox="0 0 18 18"><defs><linearGradient id="ng" x1="0" y1="0" x2="0" y2="1"><stop offset="0" stop-color="#2fc1f0"/><stop offset="1" stop-color="#0b82d4"/></linearGradient></defs><rect x="3" y="4" width="14.5" height="10" rx="1" fill="url(#ng)"/><rect x="9.5" y="14" width="2" height="2.2" fill="#9aa6ad"/><rect x="6.5" y="15.8" width="8" height="1.5" fill="#b4bec4"/><circle cx="5" cy="5" r="4.3" fill="#3aa0e0"/><path d="M2.5 3.5Q4 2.5 5 4Q6 6 7.5 5.5M3 7.5Q4.5 6.5 6 8" fill="none" stroke="#7fd07a" stroke-width="1"/></svg>
<div class="t" style="left:251.3px;top:577.84px;font-size:12px;line-height:12px;color:#1b1b1b;">Network</div>
<div class="t" style="left:386px;top:223.34px;font-size:12px;line-height:12px;color:#4c5a6e;">Name</div>
<svg class="abs" style="left:499px;top:213px" width="10" height="7" viewBox="0 0 10 7"><path d="M1 5.5L5 1.5L9 5.5" fill="none" stroke="#6a6a6a" stroke-width="1"/></svg>
<div class="abs" style="left:627px;top:216px;width:1px;height:25px;background:#e5e5e5;"></div>
<div class="abs" style="left:707px;top:216px;width:1px;height:25px;background:#e5e5e5;"></div>
<div class="abs" style="left:851px;top:216px;width:1px;height:25px;background:#e5e5e5;"></div>
<div class="abs" style="left:971px;top:216px;width:1px;height:25px;background:#e5e5e5;"></div>
<div class="abs" style="left:1051px;top:216px;width:1px;height:25px;background:#e5e5e5;"></div>
<div class="t" style="left:634px;top:223.34px;font-size:12px;line-height:12px;color:#4c5a6e;">Status</div>
<div class="t" style="left:714px;top:223.34px;font-size:12px;line-height:12px;color:#4c5a6e;">Date modified</div>
<div class="t" style="left:858px;top:223.34px;font-size:12px;line-height:12px;color:#4c5a6e;">Type</div>
<div class="t" style="left:978px;top:223.34px;font-size:12px;line-height:12px;color:#4c5a6e;">Size</div>
<svg class="abs" style="left:373px;top:253px" width="17" height="14" viewBox="0 0 17 14"><g opacity="0.5"><defs><linearGradient id="fg10" x1="0" y1="0" x2="0" y2="1"><stop offset="0" stop-color="#fbd86e"/><stop offset="1" stop-color="#f2b935"/></linearGradient></defs><path d="M0.5 1.8A1.3 1.3 0 0 1 1.8 0.5H6.2L8 2.2H14.7A1.3 1.3 0 0 1 16 3.5V4H0.5Z" fill="#eeb02a"/><rect x="0.5" y="2.6" width="15.5" height="10.4" rx="1" fill="url(#fg10)"/><path d="M0.5 3.2H16" stroke="#fce39a" stroke-width="0.8"/></g></svg>
<div class="t" style="left:394.4px;top:255.44px;font-size:12px;line-height:12px;color:#1b1b1b;">.dropbox.cache</div>
<svg class="abs" style="left:633px;top:255px" width="12" height="12" viewBox="0 0 12 12"><circle cx="6" cy="6" r="5.9" fill="#8a8a8a"/><rect x="2.8" y="5.1" width="6.4" height="1.9" rx="0.8" fill="#fff"/></svg>
<div class="t" style="left:714px;top:255.44px;font-size:12px;line-height:12px;color:#5d5d5d;letter-spacing:-0.2px">11/5/2025 6:17 PM</div>
<div class="t" style="left:858px;top:255.44px;font-size:12px;line-height:12px;color:#5d5d5d;">File folder</div>
<svg class="abs" style="left:373px;top:284px" width="17" height="14" viewBox="0 0 17 14"><g opacity="1"><defs><linearGradient id="fg11" x1="0" y1="0" x2="0" y2="1"><stop offset="0" stop-color="#fbd86e"/><stop offset="1" stop-color="#f2b935"/></linearGradient></defs><path d="M0.5 1.8A1.3 1.3 0 0 1 1.8 0.5H6.2L8 2.2H14.7A1.3 1.3 0 0 1 16 3.5V4H0.5Z" fill="#eeb02a"/><rect x="0.5" y="2.6" width="15.5" height="10.4" rx="1" fill="url(#fg11)"/><path d="M0.5 3.2H16" stroke="#fce39a" stroke-width="0.8"/></g></svg>
<div class="t" style="left:394.4px;top:286.44px;font-size:12px;line-height:12px;color:#1b1b1b;">New Folder With Items 16</div>
<svg class="abs" style="left:632px;top:286px" width="14" height="11" viewBox="0 0 14 11"><path d="M3.6 9.4A2.6 2.6 0 0 1 3.4 4.2A3.7 3.7 0 0 1 10.4 3.8A2.8 2.8 0 0 1 10.8 9.4Z" fill="none" stroke="#0f74d8" stroke-width="1.1"/></svg>
<div class="t" style="left:714px;top:286.44px;font-size:12px;line-height:12px;color:#5d5d5d;letter-spacing:-0.2px">11/5/2025 6:17 PM</div>
<div class="t" style="left:858px;top:286.44px;font-size:12px;line-height:12px;color:#5d5d5d;">File folder</div>
<svg class="abs" style="left:373px;top:315px" width="17" height="14" viewBox="0 0 17 14"><g opacity="1"><defs><linearGradient id="fg12" x1="0" y1="0" x2="0" y2="1"><stop offset="0" stop-color="#fbd86e"/><stop offset="1" stop-color="#f2b935"/></linearGradient></defs><path d="M0.5 1.8A1.3 1.3 0 0 1 1.8 0.5H6.2L8 2.2H14.7A1.3 1.3 0 0 1 16 3.5V4H0.5Z" fill="#eeb02a"/><rect x="0.5" y="2.6" width="15.5" height="10.4" rx="1" fill="url(#fg12)"/><path d="M0.5 3.2H16" stroke="#fce39a" stroke-width="0.8"/></g></svg>
<div class="t" style="left:394.4px;top:317.44px;font-size:12px;line-height:12px;color:#1b1b1b;">Untitled (19)</div>
<svg class="abs" style="left:632px;top:317px" width="14" height="11" viewBox="0 0 14 11"><path d="M3.6 9.4A2.6 2.6 0 0 1 3.4 4.2A3.7 3.7 0 0 1 10.4 3.8A2.8 2.8 0 0 1 10.8 9.4Z" fill="none" stroke="#0f74d8" stroke-width="1.1"/></svg>
<div class="t" style="left:714px;top:317.44px;font-size:12px;line-height:12px;color:#5d5d5d;letter-spacing:-0.2px">11/5/2025 6:17 PM</div>
<div class="t" style="left:858px;top:317.44px;font-size:12px;line-height:12px;color:#5d5d5d;">File folder</div>
<svg class="abs" style="left:373px;top:344px" width="16" height="17" viewBox="0 0 16 17"><path d="M3 0.5H9.5L13.5 4.5V15.5A0.8 0.8 0 0 1 12.7 16.3H3.3A0.8 0.8 0 0 1 2.5 15.5V1A0.5 0.5 0 0 1 3 0.5Z" fill="#fff" stroke="#a8a8a8" stroke-width="0.9"/><path d="M9.5 0.5V4.5H13.5" fill="none" stroke="#a8a8a8" stroke-width="0.9"/></svg>
<div class="t" style="left:394.4px;top:348.44px;font-size:12px;line-height:12px;color:#1b1b1b;">.dropbox</div>
<div class="t" style="left:714px;top:348.44px;font-size:12px;line-height:12px;color:#5d5d5d;letter-spacing:-0.2px">11/5/2025 6:17 PM</div>
<div class="t" style="left:858px;top:348.44px;font-size:12px;line-height:12px;color:#5d5d5d;letter-spacing:-0.65px">DROPBOX File</div>
<div class="t" style="left:1000px;top:348.44px;font-size:12px;line-height:12px;color:#5d5d5d;width:43.5px;text-align:right">1 KB</div>
<svg class="abs" style="left:373px;top:375px" width="16" height="17" viewBox="0 0 16 17"><path d="M3 0.5H9.5L13.5 4.5V15.5A0.8 0.8 0 0 1 12.7 16.3H3.3A0.8 0.8 0 0 1 2.5 15.5V1A0.5 0.5 0 0 1 3 0.5Z" fill="#fff" stroke="#a8a8a8" stroke-width="0.9"/><path d="M9.5 0.5V4.5H13.5" fill="none" stroke="#a8a8a8" stroke-width="0.9"/><circle cx="4.5" cy="12" r="3.2" fill="#fff" stroke="#b0b0b0" stroke-width="0.9"/><circle cx="4.5" cy="12" r="1.1" fill="none" stroke="#b0b0b0" stroke-width="0.8"/></svg>
<div class="t" style="left:394.4px;top:379.44px;font-size:12px;line-height:12px;color:#1b1b1b;">desktop</div>
<div class="t" style="left:714px;top:379.44px;font-size:12px;line-height:12px;color:#5d5d5d;letter-spacing:-0.2px">11/5/2025 6:17 PM</div>
<div class="t" style="left:858px;top:379.44px;font-size:12px;line-height:12px;color:#5d5d5d;">Configuration sett...</div>
<div class="t" style="left:1000px;top:379.44px;font-size:12px;line-height:12px;color:#5d5d5d;width:43.5px;text-align:right">1 KB</div>
<div class="abs" style="left:355px;top:625px;width:701px;height:16px;background:#f0f0f0;"></div>
<div class="abs" style="left:373px;top:632px;width:660px;height:2px;background:#858585;"></div>
<div class="t" style="left:210.4px;top:646.84px;font-size:12px;line-height:12px;color:#1b1b1b;">5 items</div>
<div class="abs" style="left:258px;top:647px;width:1px;height:14px;background:#e8e8e8;"></div>
<div class="abs" style="left:1004px;top:641px;width:24px;height:24px;background:#e5f1fb;border:2px solid #0a74d8"></div>
<svg class="abs" style="left:1010px;top:648px" width="14" height="12" viewBox="0 0 14 12"><path d="M1 1.4H13M1 4.4H13M1 7.5H13M1 10.5H13" stroke="#4a4a4a" stroke-width="0.9"/></svg>
<svg class="abs" style="left:1033px;top:646px" width="15" height="14" viewBox="0 0 15 14"><rect x="1.5" y="1.5" width="12" height="9.2" fill="none" stroke="#4a4a4a" stroke-width="1"/><path d="M1 12.5H14" stroke="#4a4a4a" stroke-width="1"/></svg>
</div></div>
</body></html>
